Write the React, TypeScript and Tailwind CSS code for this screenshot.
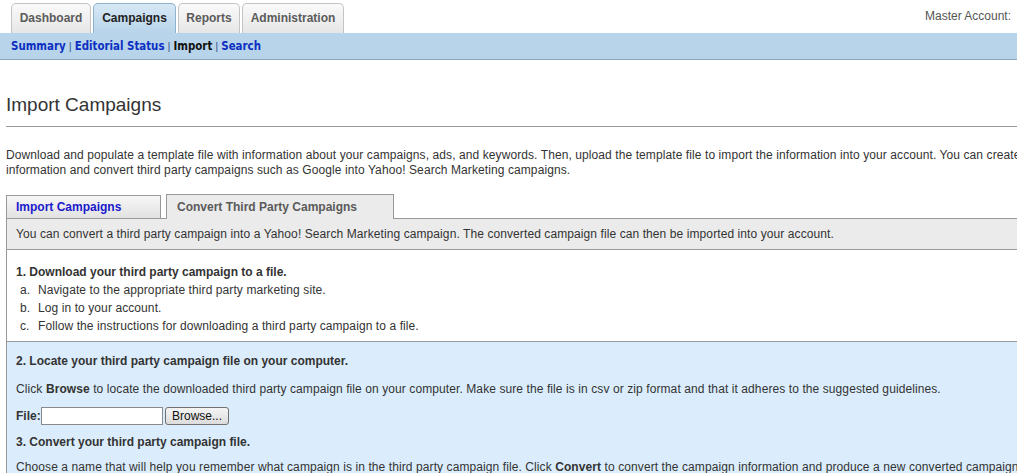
const TOP_TABS = [
  { label: "Dashboard", w: "w-[80px]", active: false },
  { label: "Campaigns", w: "w-[83px]", active: true },
  { label: "Reports", w: "w-[62px]", active: false },
  { label: "Administration", w: "w-[102px]", active: false },
]

const SUB_LINKS = ["Summary", "Editorial Status", "Import", "Search"]

const STEPS = [
  "Navigate to the appropriate third party marketing site.",
  "Log in to your account.",
  "Follow the instructions for downloading a third party campaign to a file.",
]

export default function App() {
  return (
    <div className="w-[1017px] h-[473px] overflow-hidden bg-white text-[#333] font-['Liberation_Sans',Arial,sans-serif] text-[12px] tracking-[0.09px]">
      <div className="w-[1240px]">
        {/* top tabs */}
        <div className="relative h-[33px] flex items-end gap-[2px] pl-[11px]">
          {TOP_TABS.map((t) => (
            <div
              key={t.label}
              className={`${t.w} h-[30px] pb-[2px] flex items-center justify-center rounded-t-[5px] border border-b-0 text-[12px] font-bold tracking-normal ${
                t.active
                  ? "bg-gradient-to-b from-[#d7e8f5] to-[#b7d4ea] border-[#8fb3cf] text-[#222]"
                  : "bg-gradient-to-b from-[#fafafa] to-[#e6e6e6] border-[#c4c4c4] text-[#5b5b5b]"
              }`}
            >
              {t.label}
            </div>
          ))}
          <div className="absolute left-[925px] top-[7px] text-[12px] text-[#555] tracking-normal">Master Account:</div>
        </div>

        {/* sub nav */}
        <div className="h-[27px] pt-[1px] bg-[#b7d4ea] border-b border-[#8da7bd] flex items-center pl-[11px] font-['DejaVu_Sans_Condensed','DejaVu_Sans',Verdana,sans-serif] text-[11.4px] tracking-normal">
          {SUB_LINKS.map((l, i) => (
            <span key={l} className="flex items-center">
              {i > 0 && <span className="mx-[3px] text-[#3a5e8c] font-['Liberation_Sans',Arial,sans-serif]">|</span>}
              <span className={`font-bold ${l === "Import" ? "text-[#111]" : "text-[#0c2fc2]"}`}>{l}</span>
            </span>
          ))}
        </div>

        {/* page */}
        <div className="pl-[6px]">
          <h1 className="mt-[33px] text-[19px] leading-[24px] text-[#333] tracking-normal">Import Campaigns</h1>
          <div className="mt-[9px] border-t border-[#999]" />
          <p className="mt-[21px] leading-[15px] w-[1230px]">
            Download and populate a template file with information about your campaigns, ads, and keywords. Then, upload the template file to import the information into your account. You can create a new campaign
            <br />
            information and convert third party campaigns such as Google into Yahoo! Search Marketing campaigns.
          </p>

          {/* sub tabs */}
          <div className="mt-[16px] flex items-end h-[25px]">
            <div className="w-[155px] h-[24px] flex items-center pl-[9px] bg-gradient-to-b from-[#f6f6f6] to-[#e2e2e2] border border-[#999] font-bold text-[#1a1acc] tracking-normal">
              Import Campaigns
            </div>
            <div className="w-[5px] h-full border-b border-[#999]" />
            <div className="w-[228px] h-[25px] flex items-center pl-[10px] bg-[#ebebeb] border border-b-0 border-[#999] font-bold text-[#5a5a5a] tracking-normal">
              Convert Third Party Campaigns
            </div>
            <div className="flex-1 h-full border-b border-[#999]" />
          </div>

          <div className="border-l border-[#999]">
            <div className="h-[31px] flex items-center pl-[9px] bg-[#ebebeb] border-b border-[#999]">
              You can convert a third party campaign into a Yahoo! Search Marketing campaign. The converted campaign file can then be imported into your account.
            </div>

            <div className="pl-[9px] pt-[15px] pb-[6px] border-b border-[#999]">
              <div className="font-bold leading-[15px] tracking-normal">1. Download your third party campaign to a file.</div>
              <ul className="mt-[1px]">
                {STEPS.map((s, i) => (
                  <li key={s} className="flex leading-[18px]">
                    <span className="w-[22px] pl-[4px]">{"abc"[i]}.</span>
                    <span>{s}</span>
                  </li>
                ))}
              </ul>
            </div>

            <div className="bg-[#dbedfc] pl-[9px] pt-[12px] pb-[20px]">
              <div className="font-bold leading-[15px] tracking-normal">2. Locate your third party campaign file on your computer.</div>
              <div className="mt-[13px] leading-[15px]">
                Click <b>Browse</b> to locate the downloaded third party campaign file on your computer. Make sure the file is in csv or zip format and that it adheres to the suggested guidelines.
              </div>
              <div className="mt-[10px] flex items-center">
                <span className="font-bold w-[25px] tracking-normal">File:</span>
                <div className="w-[122px] h-[18px] bg-white border border-[#8a8a8a]" />
                <div className="ml-[2px] w-[64px] h-[18px] flex items-center justify-center rounded-[3px] border border-[#707070] bg-gradient-to-b from-[#f4f4f4] to-[#dcdcdc] text-[12px] text-[#111] tracking-normal">
                  Browse...
                </div>
              </div>
              <div className="mt-[10px] font-bold leading-[15px] tracking-normal">3. Convert your third party campaign file.</div>
              <div className="mt-[10px] leading-[15px]">
                Choose a name that will help you remember what campaign is in the third party campaign file. Click <b>Convert</b> to convert the campaign information and produce a new converted campaign file.
              </div>
            </div>
          </div>
        </div>
      </div>
    </div>
  )
}
